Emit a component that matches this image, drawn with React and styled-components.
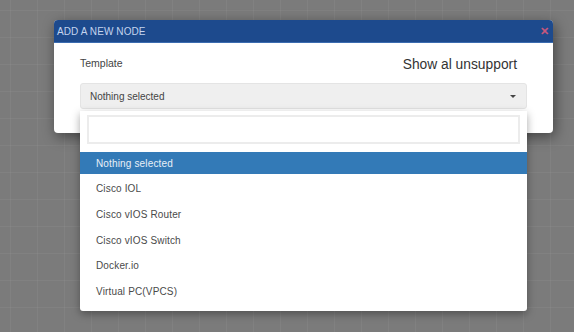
import React from 'react';
import styled, { createGlobalStyle } from 'styled-components';

const GlobalStyle = createGlobalStyle`
	html, body {
		margin: 0;
		padding: 0;
	}
	body {
		width: 574px;
		height: 332px;
		overflow: hidden;
		font-family: 'Liberation Sans', Arial, sans-serif;
		background-color: #7b7b7b;
		background-image:
			linear-gradient(to right, rgba(255, 255, 255, 0.045) 1px, transparent 1px),
			linear-gradient(to bottom, rgba(255, 255, 255, 0.045) 1px, transparent 1px);
		background-size: 27px 27px;
		background-position: 10px 10px;
	}
`;

const Canvas = styled.div`
	padding: 20px 21px 0 54px;
`;

const Modal = styled.div`
	width: 499px;
	background: #fff;
	border-radius: 4px;
	box-shadow: 2px 4px 14px rgba(0, 0, 0, 0.45);
`;

const Header = styled.div`
	height: 22px;
	display: flex;
	align-items: center;
	justify-content: space-between;
	padding: 0 4px 0 3px;
	background: #1d4a8d;
	border-radius: 4px 4px 0 0;
	border-bottom: 1px solid #3b6cb0;
`;

const Title = styled.span`
	font-size: 10px;
	color: #c4d4ee;
	letter-spacing: 0.1px;
`;

const Close = styled.span`
	font-size: 11px;
	line-height: 1;
	color: #c7577c;
	font-weight: bold;
`;

const Body = styled.div`
	padding: 12px 26px 24px 26px;
`;

const LabelRow = styled.div`
	display: flex;
	justify-content: space-between;
	align-items: center;
	height: 16px;
`;

const Label = styled.span`
	font-size: 10.5px;
	color: #444;
`;

const Toggle = styled.span`
	font-size: 13.8px;
	color: #333;
	margin-right: 10px;
	margin-top: 3px;
`;

const SelectWrap = styled.div`
	position: relative;
	margin-top: 12px;
`;

const SelectButton = styled.div`
	height: 26px;
	box-sizing: border-box;
	display: flex;
	align-items: center;
	justify-content: space-between;
	padding: 0 10px 0 9px;
	background: #efefef;
	border: 1px solid #e4e4e4;
	border-radius: 3px;
	font-size: 10px;
	color: #444;
`;

const Caret = styled.span`
	width: 0;
	height: 0;
	border-left: 3px solid transparent;
	border-right: 3px solid transparent;
	border-top: 3px solid #444;
`;

const Menu = styled.div`
	position: absolute;
	top: 28px;
	left: 0;
	right: 0;
	height: 200px;
	box-sizing: border-box;
	background: #fff;
	border-radius: 0 0 3px 3px;
	box-shadow: 0 3px 8px rgba(0, 0, 0, 0.35);
	padding-top: 4px;
`;

const Search = styled.div`
	margin: 0 7px;
	height: 29px;
	box-sizing: border-box;
	border: 2px solid #ececec;
	background: #fff;
`;

const Options = styled.ul`
	list-style: none;
	margin: 8px 0 0;
	padding: 0;
	display: flex;
	flex-direction: column;
	gap: 3.7px;
`;

const Option = styled.li`
	height: 22px;
	display: flex;
	align-items: center;
	padding-left: 16px;
	font-size: 10px;
	letter-spacing: 0.15px;
	background: ${p => (p.active ? '#337ab7' : 'transparent')};
	color: ${p => (p.active ? '#e8f0f8' : '#4a4a4a')};
`;

const templates = [
	'Nothing selected',
	'Cisco IOL',
	'Cisco vIOS Router',
	'Cisco vIOS Switch',
	'Docker.io',
	'Virtual PC(VPCS)',
];

export default function App() {
	return (
		<>
			<GlobalStyle />
			<Canvas>
				<Modal>
					<Header>
						<Title>ADD A NEW NODE</Title>
						<Close>✕</Close>
					</Header>
					<Body>
						<LabelRow>
							<Label>Template</Label>
							<Toggle>Show al unsupport</Toggle>
						</LabelRow>
						<SelectWrap>
							<SelectButton>
								<span>Nothing selected</span>
								<Caret />
							</SelectButton>
							<Menu>
								<Search />
								<Options>
									{templates.map((t, i) => (
										<Option key={t} active={i === 0}>
											{t}
										</Option>
									))}
								</Options>
							</Menu>
						</SelectWrap>
					</Body>
				</Modal>
			</Canvas>
		</>
	);
}
